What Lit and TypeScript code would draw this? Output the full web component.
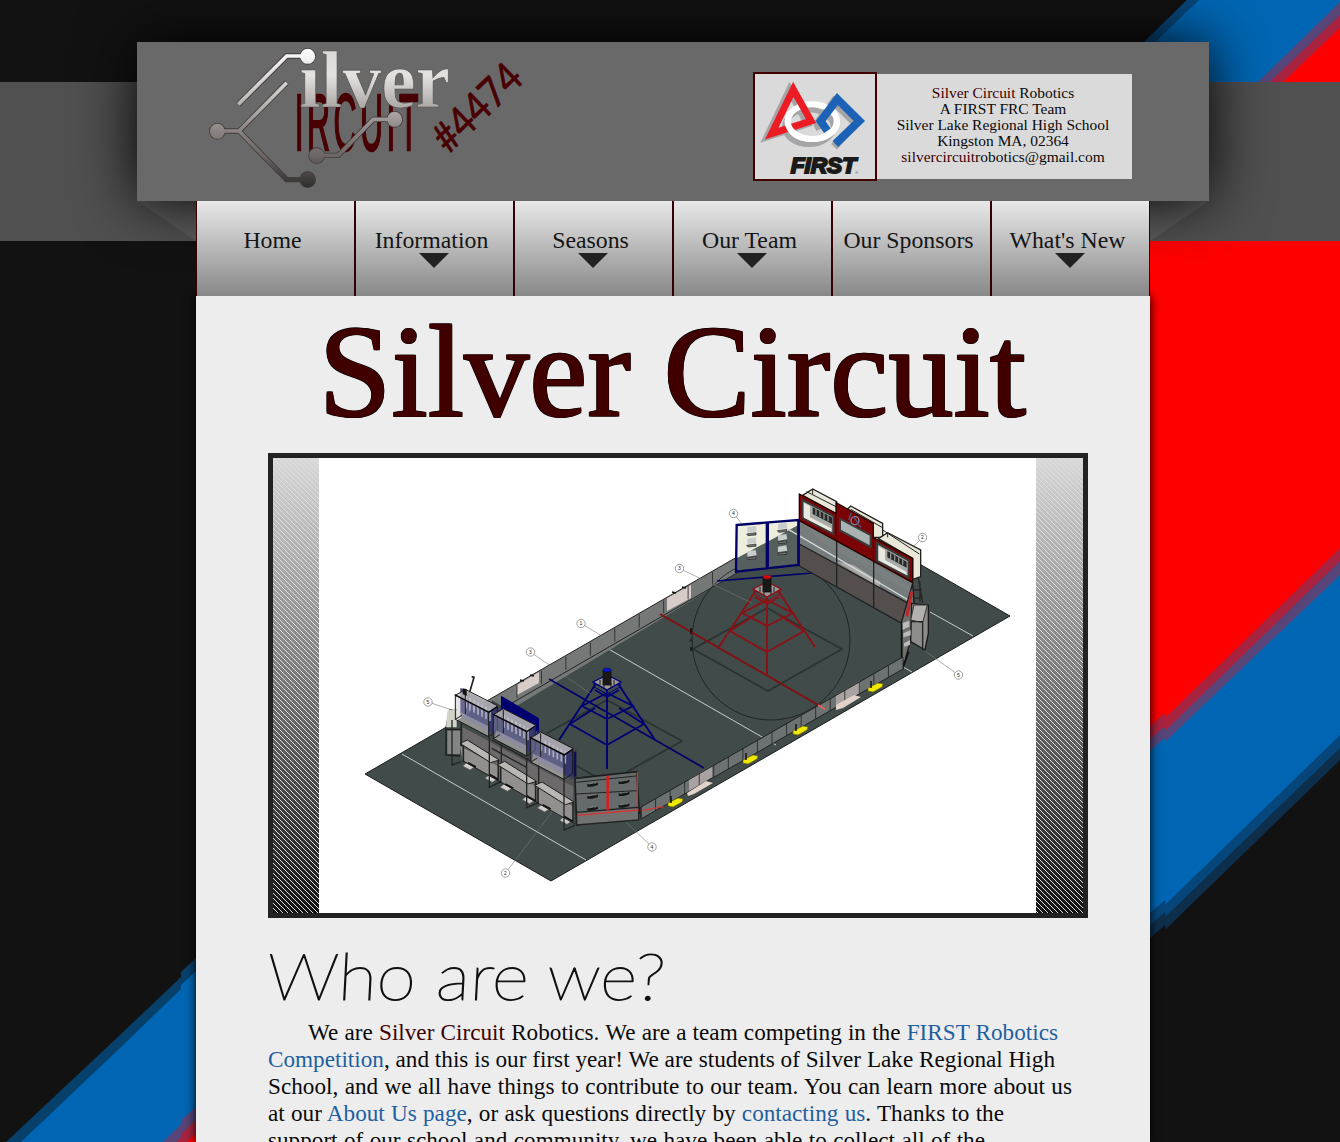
import { LitElement, html, css, svg } from "lit";
import { customElement } from "lit/decorators.js";

const INK = "#1b1b1b";

@customElement("page-backdrop")
class PageBackdrop extends LitElement {
  static styles = css`
    :host { display: block; width: 100%; height: 100%; }
    svg { display: block; }
  `;
  render() {
    return html`<svg width="1340" height="1142" viewBox="0 0 1340 1142">
      <rect width="1340" height="1142" fill="#121212" />
      <path d="M1187 0H1340V760L1166 929L1165 925L1150 938V42H1144Z" fill="#0d2f4c" />
      <path d="M1187 0H1340V748L1166 916L1165 912L1150 925V42H1144Z" fill="#07467a" />
      <path d="M1199 0H1340V735L1166 904L1165 900L1150 913V47Z" fill="#0066b3" />
      <path d="M1340 2L1258 82L1150 188V751L1164 738L1166 741L1340 575Z" fill="#574478" />
      <path d="M1340 15L1270 82L1150 200V739L1164 727L1166 730L1340 561Z" fill="#a8233f" />
      <path d="M1340 28L1283 82L1150 210V727L1164 713L1166 717L1340 548Z" fill="#f00" />
      <path d="M196 958L181 972V977L120 1035L6 1142H196Z" fill="#07406a" />
      <path d="M196 971L181 985V989L120 1048L21 1142H196Z" fill="#0066b3" />
      <path d="M196 1107L181 1120V1124L163 1142H196Z" fill="#574478" />
      <path d="M196 1120L181 1134V1137L176 1142H196Z" fill="#a8233f" />
      <path d="M196 1133L187 1142H196Z" fill="#f00" />
      <rect y="82" width="1340" height="159" fill="#505050" />
      <path d="M137 201H196V241Z" fill="#5b5b5b" />
      <path d="M1209 201H1150V241Z" fill="#5b5b5b" />
    </svg>`;
  }
}

@customElement("team-logo")
class TeamLogo extends LitElement {
  static styles = css`
    :host { display: block; }
    svg { display: block; }
    .script { font: bold 238px "Liberation Serif", serif; }
    .narrow { font: 238px "Liberation Sans", sans-serif; letter-spacing: 26px; stroke-width: 7px; }
    .number { font: 124px Lato, sans-serif; }
  `;
  render() {
    const traces = "M145 193L290 48H340M290 128L147 273H95M147 273L290 419H340M395 346H445L550 238H600";
    const nodes = [[353, 49], [82, 274], [353, 419], [380, 347], [614, 238]];
    return html`<svg width="350" height="159" viewBox="0 6 1050 477">
      <defs>
        <linearGradient id="metal" gradientUnits="userSpaceOnUse" x1="0" y1="25" x2="0" y2="445">
          <stop offset="0" stop-color="#fff" /><stop offset=".35" stop-color="#c4c0be" />
          <stop offset=".6" stop-color="#878180" /><stop offset=".77" stop-color="#6b6563" />
          <stop offset="1" stop-color="#2e2b2c" />
        </linearGradient>
        <linearGradient id="letters" gradientUnits="userSpaceOnUse" x1="0" y1="40" x2="0" y2="205">
          <stop offset="0" stop-color="#dcdad9" /><stop offset=".4" stop-color="#e4e2e1" /><stop offset="1" stop-color="#aaa6a4" />
        </linearGradient>
      </defs>
      <text class="narrow" transform="translate(314 331) scale(.402 1)" fill="#480003" stroke="#480003">IRCUIT</text>
      <text class="narrow" transform="translate(318 331) scale(.402 1)" fill="#480003" stroke="#480003" aria-hidden="true"></text>
      <text class="script" x="328" y="200" textLength="452" lengthAdjust="spacingAndGlyphs"
        fill="url(#letters)" stroke="#55504e" stroke-width="2">ilver</text>
      <path d=${traces} fill="none" stroke="#413c3b" stroke-width="16" />
      ${nodes.map(([x, y]) => svg`<circle cx=${x} cy=${y} r="25" fill="#413c3b"/>`)}
      <path d=${traces} fill="none" stroke="url(#metal)" stroke-width="11" />
      ${nodes.map(([x, y]) => svg`<circle cx=${x} cy=${y} r="22.5" fill="url(#metal)"/>`)}
      <text class="number" transform="translate(776 344) rotate(-44)" textLength="320"
        lengthAdjust="spacingAndGlyphs" fill="#480003" stroke="#480003" stroke-width="2">#4474</text>
    </svg>`;
  }
}

@customElement("first-badge")
class FirstBadge extends LitElement {
  static styles = css`
    :host { display: block; }
    svg { display: block; }
    .word { font: italic bold 68px "Liberation Sans", sans-serif; }
    .mark { font: 12px "Liberation Sans", sans-serif; }
  `;
  render() {
    return html`<svg width="120" height="105" viewBox="45 42 360 315">
      <g fill="none" stroke="#a5a5a7" transform="translate(-10 8)">
        <path d="M159 82L212 183L92 222Z" stroke-width="22" />
        <path d="M250 200L242 183L292 117L358 183L292 252" stroke-width="24" />
        <ellipse cx="217" cy="193" rx="73" ry="52" stroke-width="16" />
      </g>
      <g fill="none">
        <ellipse cx="217" cy="185" rx="74" ry="52" stroke="#fff" stroke-width="18" />
        <path d="M262 212L242 183L292 117L358 183L286 252" stroke="#1c63b7" stroke-width="24" />
        <path d="M160 88L213 183L95 221Z" stroke="#ec1c24" stroke-width="21" />
        <path d="M152 160A74 52 0 0 0 205 236" stroke="#fff" stroke-width="18" />
        <path d="M205 236A74 52 0 0 0 289 175" stroke="#fff" stroke-width="18" />
      </g>
      <text class="word" x="152" y="340" textLength="196" lengthAdjust="spacingAndGlyphs"
        fill="#1a1a1a" stroke="#1a1a1a" stroke-width="6">FIRST</text>
      <text class="mark" x="346" y="342" fill="#333">®</text>
    </svg>`;
  }
}

@customElement("field-drawing")
class FieldDrawing extends LitElement {
  static styles = css`
    :host { display: block; }
    svg { display: block; background: #fff; }
    .tag { font: 5px "Liberation Sans", sans-serif; text-anchor: middle; }
  `;

  private callout(x: number, y: number, x2: number, y2: number, n: string) {
    return svg`<path d="M${x} ${y}L${x2} ${y2}" stroke="#777" stroke-width=".6"/>
      <circle cx=${x} cy=${y} r="4.2" fill="#fff" stroke="#777" stroke-width=".7"/>
      <text class="tag" x=${x} y=${y + 1.8} fill="#222">${n}</text>`;
  }

  private tower(x: number, y: number, colour: string, cap: string) {
    return svg`<g transform="translate(${x} ${y})" fill="none" stroke=${colour} stroke-width="1.9">
      <path d="M-10 12L-48 70M10 12L48 70M0 18V99M-25 36L0 49L26 36L0 23ZM-37 54L0 75L37 54M-37 54L-12 38M37 54L12 38M-12 20L0 27L12 20"/>
      <path d="M-14 12L0 5L14 12L0 20Z" fill="#9c9a9a" stroke-width="1.3"/>
      <path d="M-13 13L0 20L13 13V17L0 24L-13 17Z" stroke-width="1"/>
      <rect x="-4" y="0" width="8" height="15" fill="#181818" stroke="#111" stroke-width=".8"/>
      <ellipse cx="0" cy="0" rx="4" ry="1.8" fill=${cap} stroke-width=".6"/>
      <path d="M-7 10V15M7 10V15M-3 13V18M4 13V18" stroke="#222" stroke-width="1"/>
    </g>`;
  }

  private postsAlong(x1: number, y1: number, x2: number, y2: number, n: number, h: number) {
    return Array.from({ length: n + 1 }, (_, i) => {
      const x = x1 + ((x2 - x1) * i) / n;
      const y = y1 + ((y2 - y1) * i) / n;
      return svg`<path d="M${x} ${y}v${h}" stroke="#222" stroke-width=".8"/>`;
    });
  }

  private blueStation(x: number, y: number) {
    return svg`<g transform="translate(${x} ${y})">
      <path d="M15 -5L128 53V140L15 82Z" fill="#34346f" opacity=".9"/>
      <path d="M0 18L30 0L128 50L100 70Z" fill="#c9c8c0" opacity=".75"/>
      <path d="M0 18L100 70V142L0 90Z" fill="#aeb0ba" opacity=".35"/>
      <path d="M8 65L98 110V140L4 90Z" fill="#d5d2c9" opacity=".38"/>
      ${[0, 1, 2, 3, 4, 5, 6].map((i) => svg`<path d="M${32 + i * 12} ${20 + i * 6.3}v37" stroke="#c9cad6" stroke-width="5" opacity=".75"/>`)}
      <path d="M0 18L30 0L128 50L100 70ZM0 18V90L100 142V70M100 142L126 125V52M0 90L20 78M30 4V74" fill="none" stroke=${INK} stroke-width="3"/>
      <path d="M98 70L126 52M-2 16L100 68" stroke="#090909" stroke-width="4"/>
    </g>`;
  }

  private blueWall() {
    return svg`<g transform="translate(360 640) scale(.33333)">
      <path d="M395 180L650 330V415H610L395 300Z" fill="#3d4645"/>
      <path d="M423 167L537 235V280L423 215Z" fill="#000070"/>
      <path d="M335 110L342 112L325 170L341 240" fill="none" stroke="#222" stroke-width="5"/>
      <path d="M270 210L258 262V345L300 348M258 268H305M262 300L308 312M268 210H290" fill="none" stroke=${INK} stroke-width="4"/>
      <path d="M262 212L290 205V262H258Z" fill="#d2d3c7"/>
      <path d="M262 272H300V342H262Z" fill="#838584"/>
      <path d="M304 262L640 420V552L304 360Z" fill="#505251"/>
      <path d="M308 262L640 440V500L308 320Z" fill="#6b6969"/>
      <path d="M300 318L642 500V552L308 362Z" fill="#92908f"/>
      ${[[300, 310], [412, 374], [524, 436]].map(([x, y]) => svg`
        <path d="M${x} ${y}L${x + 22} ${y - 10}L${x + 118} ${y + 50}L${x + 92} ${y + 58}Z" fill="#b9b6b4" stroke=${INK} stroke-width="3"/>
        <path d="M${x + 10} ${y + 8}V${y + 55}M${x + 115} ${y + 50}V${y + 112}" stroke="#222" stroke-width="5"/>
        <path d="M${x + 8} ${y + 68}l12 -10 24 13 -14 9z" fill="#cfcdc9" stroke="#555" stroke-width="2"/>
        <path d="M${x + 75} ${y + 105}l12 -10 24 13 -14 9z" fill="#cfcdc9" stroke="#555" stroke-width="2"/>
        <path d="M${x + 24} ${y + 58}l24 13M${x + 88} ${y + 93}l26 15" stroke="#111" stroke-width="5"/>`)}
      <path d="M276 240V375L304 365M388 290V442L424 424M500 355V503L535 488M612 418V570L645 556M304 250V318M395 300L515 365M395 325L500 382M424 310V370M536 370V430" fill="none" stroke="#232525" stroke-width="4"/>
      <path d="M308 362L645 552" stroke="#171717" stroke-width="3"/>
      ${this.blueStation(286, 148)}${this.blueStation(400, 206)}${this.blueStation(512, 276)}
      <path d="M308 145V162L320 168V148Z" fill="#111"/>
      <path d="M645 335V410" stroke="#10104f" stroke-width="8"/>
      <path d="M645 415L830 395L838 520L650 555Z" fill="#646b6a" stroke="#1c1f1f" stroke-width="5"/>
      <path d="M648 427L828 408M648 462L832 452" stroke="#222" stroke-width="3"/>
      <path d="M650 517L836 502V540L650 555Z" fill="#6f7271" stroke="#222" stroke-width="4"/>
      <path d="M743 407V512" stroke="#ee1111" stroke-width="7"/>
      <path d="M652 526L836 510M832 397V500M845 512L910 500" stroke="#d63533" stroke-width="4"/>
      ${[[682, 432], [682, 468], [682, 504], [776, 424], [776, 460], [776, 495]].map(([x, y]) => svg`
        <path d="M${x} ${y}l20 -4h12v7l-18 5h-14z" fill="#161616"/><path d="M${x + 3} ${y}l16 -3h8" stroke="#aaa" stroke-width="2"/>`)}
    </g>`;
  }

  private redWall() {
    const boxes = ["M488 76L518 57L590 95V132Z", "M620 120L632 108L728 160V202H700Z", "M715 206L743 188L842 240V320L818 328V265Z"];
    const windows = ["M487 90L580 138V192L487 143Z", "M600 146L692 195V231L600 181Z", "M711 219L806 271V322L711 273Z"];
    return svg`<g transform="translate(640 470) scale(.33333)">
      ${boxes.map((d) => svg`<path d=${d} fill="#e9e8d9" stroke="#222" stroke-width="4"/>`)}
      <path d="M500 65L588 110M632 118L726 172M728 180L838 252M518 57V72M743 188V202" stroke="#222" stroke-width="3"/>
      <path d="M290 165L475 150V285L288 305Z" fill="#555f5d"/>
      <path d="M290 165L475 150V165L290 265Z" fill="#eeeedd"/>
      <path d="M478 152L818 335V405L478 222Z" fill="#757c7b"/>
      <path d="M500 165L818 350V370L540 215Z" fill="#8c9190" opacity=".2"/>
      <path d="M478 222L812 402L785 460L478 288Z" fill="#544f4d"/>
      <path d="M590 275L640 285L720 335L718 352Z" fill="#aaa9a6"/>
      <path d="M440 175L805 390" stroke="#d5d9d8" stroke-width="4"/>
      <path d="M478 222L812 404M478 288L785 460M590 210V352M701 275V415M478 152V288" fill="none" stroke="#202323" stroke-width="4"/>
      <path d="M478 72L588 130V98L700 160V203L818 265V338L478 152Z" fill="#7b0205" stroke="#250000" stroke-width="4"/>
      <path d="M588 130V210M700 203V275" stroke="#4a0003" stroke-width="3"/>
      ${windows.map((d, i) => svg`<path d=${d} fill=${i === 1 ? "#a9b3b2" : "#a8aca8"} stroke="#3a3a3a" stroke-width="6"/>`)}
      <path d="M492 98L510 108V142L574 175V185L492 143ZM716 228L735 240V270L800 306V315L716 271Z" fill="#e9e9df"/>
      <path d="M518 112L576 142V162L518 132ZM742 243L800 275V293L742 262Z" fill="#272727"/>
      ${[0, 1, 2, 3].map((i) => svg`<path d="M${528 + i * 12} ${118 + i * 6}v18M${752 + i * 12} ${250 + i * 6}v16" stroke="#8f9692" stroke-width="4"/>`)}
      <circle cx="645" cy="152" r="12" fill="none" stroke="#85859a" stroke-width="4"/>
      <path d="M634 128L626 150M650 160L664 172M640 140L655 160" stroke="#4d567f" stroke-width="4"/>
      <path d="M290 165L475 150V285L288 305ZM382 158V296" fill="none" stroke="#000065" stroke-width="7"/>
      <path d="M382 158V296" stroke="#000065" stroke-width="10"/>
      ${[[322, 172], [322, 206], [322, 244], [414, 162], [414, 196], [414, 230]].map(([x, y]) => svg`
        <path d="M${x} ${y}l25 -4l3 16l-28 4z" fill="#c9cccc"/><path d="M${x - 2} ${y + 20}l28 -4v7l-24 2z" fill="#777" stroke="#222" stroke-width="2"/>`)}
      <path d="M818 340L785 455V560L790 590L812 510L822 400Z" fill="#70706e" stroke=${INK} stroke-width="4"/>
      <path d="M815 365L800 440" stroke="#bb2828" stroke-width="9"/>
      <path d="M815 400L865 405V490L855 540L812 515Z" fill="#8c8c8b" stroke=${INK} stroke-width="4"/>
      <path d="M822 405L862 405L848 458L812 450Z" fill="#b3b0ae" stroke="#333" stroke-width="3"/>
      <path d="M848 458V540M812 455H850M835 325L848 398M840 335V395M822 360L846 358M824 385L848 383" stroke="#252525" stroke-width="4"/>
      <path d="M786 460L808 452V470L786 480ZM790 490L812 480V496L790 502ZM792 520L810 510V525L792 530Z" fill="#bbb"/>
      <path d="M785 460V560L790 590L806 545" fill="none" stroke="#111" stroke-width="5"/>
    </g>`;
  }

  render() {
    return html`<svg width="717" height="455" viewBox="319 458 717 455">
      <path d="M365 774L824 509L1010 616L551 881Z" fill="#414b49" stroke="#1a1d1d" stroke-width="1" />
      <path d="M402 754L586 860M605 647L776 745M930 612L973 636M903 667L912 672" stroke="#c8cdcb" stroke-width="1" />
      <path d="M737 557L485 702L510 710L737 573Z" fill="#747978" />
      <path d="M691 585L667 598V611L691 598ZM539 672L517 685V695L539 683Z" fill="#d8ccc8" />
      <path d="M737 557L485 702M737 573L512 703" stroke="#222" stroke-width="1" />
      ${this.postsAlong(737, 558, 517, 685, 9, 13)}
      <path d="M672 592l4 1M682 587l4 1M520 680l4 1M530 675l4 1" stroke="#111" stroke-width="1.5" />
      <path d="M693 649L767 608L842 649L768 691ZM607 700L682 741L607 783L533 741Z" fill="none" stroke="#293432" stroke-width="1.7" />
      <ellipse cx="771" cy="640" rx="79" ry="80" fill="none" stroke="#171d1d" stroke-width=".8" />
      <path d="M660 614L827 710" stroke="#801012" stroke-width="2" />
      <path d="M549 679L704 768M717 581L812 573" stroke="#000069" stroke-width="1.7" />
      ${this.redWall()}
      ${this.tower(767, 577, "#8b1114", "#e80000")}
      ${this.tower(607, 670, "#000075", "#0018d8")}
      <path d="M903 657L641 807V819L903 669Z" fill="#6c7271" />
      <path d="M860 681L836 695V706L860 693ZM712 766L689 779V791L712 777Z" fill="#a8a3a1" />
      <path d="M903 657L641 807V819L903 669" fill="none" stroke="#222" stroke-width="1" />
      ${this.postsAlong(903, 657, 641, 807, 18, 12)}
      <path d="M836 705l18 -10l7 2l-18 11l-7 2zM687 793l19 -12l7 2l-19 11l-6 2z" fill="#e2d2cc" />
      ${[[868, 688], [793, 731], [743, 760], [668, 803]].map(([x, y]) => svg`
        <path d="M${x} ${y}l10 -5l5 1l-1 3l-9 5l-5 -1z" fill="#f1e900" stroke="#6b6900" stroke-width=".6"/>
        <path d="M${x + 3} ${y - 7}v7" stroke="#111" stroke-width="1.5"/>`)}
      <path d="M818 705L825 709" stroke="#ee6060" stroke-width="1.5" />
      ${this.blueWall()}
      <path d="M691 628v6M691 647v4" stroke="#111" stroke-width="1.5" />
      <text class="tag" x="691" y="642" fill="#111">A</text>
      ${this.callout(733.5, 513.5, 742, 524, "4")}
      ${this.callout(922.5, 537.5, 914, 546, "2")}
      ${this.callout(679.5, 568.5, 752, 603, "3")}
      ${this.callout(581, 623.5, 602, 636, "1")}
      ${this.callout(530.5, 652, 591, 694, "3")}
      ${this.callout(428, 702, 452, 710, "5")}
      ${this.callout(958.5, 675, 925, 651, "5")}
      ${this.callout(652, 847, 626, 822, "4")}
      ${this.callout(505.5, 873, 552, 812, "2")}
    </svg>`;
  }
}

@customElement("app-root")
class AppRoot extends LitElement {
  static styles = css`
    :host {
      display: block; position: relative; height: 1142px; overflow: hidden;
      background: #121212; font-family: "Liberation Serif", serif; color: #0a0a0a;
    }
    .backdrop { position: absolute; inset: 0; }
    .page { position: relative; display: flex; flex-direction: column; padding: 42px 131px 0 137px; }
    .header {
      display: flex; align-items: flex-start; height: 159px; background: #696969;
      box-shadow: 0 0 60px #000; padding-left: 53px; box-sizing: border-box;
    }
    .contact { display: flex; align-items: flex-start; margin: 30px 0 0 213px; }
    .badge { border: 2px solid #400000; background: #dadada; width: 120px; height: 105px; }
    .address {
      background: #dadada; width: 255px; height: 105px; margin-top: 2px; box-sizing: border-box;
      padding: 11px 3px 0 0; text-align: center; font-size: 15.45px; line-height: 16px;
    }
    .maroon { color: #400000; }
    .column { position: relative; width: 954px; margin-left: 59px; }
    .nav { display: grid; grid-template-columns: repeat(6, 1fr); height: 95px; }
    .item {
      display: flex; flex-direction: column; align-items: center; box-sizing: border-box;
      border: solid #350000; border-width: 0 1px; padding-top: 26px;
      background: linear-gradient(#e8e8e8, #888); color: #151515; font-size: 23.8px; line-height: 26px;
    }
    .label { margin-right: 6px; white-space: nowrap; }
    .arrow { border: solid transparent; border-width: 15px 15px 0; border-top-color: #222; margin-right: 1px; }
    .content {
      height: 846px; box-sizing: border-box; background: #ededed;
      box-shadow: 0 0 10px #000; padding: 0 62px 0 72px; overflow: hidden;
    }
    .title {
      margin: 0; height: 157px; padding-right: 11px; text-align: center; white-space: nowrap;
      font-weight: 400; font-size: 130.6px; line-height: 153px; color: #400000;
      text-shadow: 1px 1px #000, -1px -1px #000, 1px -1px #000, -1px 1px #000;
      -webkit-text-stroke: 1.4px #400000;
    }
    .slides {
      width: 820px; height: 465px; box-sizing: border-box; border: 5px solid #222;
      display: flex; justify-content: center; padding-right: 1px;
      background:
        url("data:image/svg+xml,%3Csvg xmlns='http://www.w3.org/2000/svg' width='5' height='5' shape-rendering='crispEdges'%3E%3Cpath d='M0 0h1v1h-1zM1 1h1v1h-1zM2 2h1v1h-1zM3 3h1v1h-1zM4 4h1v1h-1z' fill='%23dedede'/%3E%3C/svg%3E") padding-box,
        linear-gradient(#d9d9d9, #111) padding-box;
    }
    .heading { display: block; margin-top: 26px; }
    .thin { font: 100 65px Lato, sans-serif; }
    .copy { margin: 0; padding-top: 5px; }
    .line {
      display: block; font-size: 23.2px; line-height: 27px; white-space: nowrap;
      text-align: justify; text-align-last: justify;
    }
    .l1 { width: 750px; margin-left: 40px; }
    .l2 { width: 787px; }
    .l3 { width: 804px; }
    .l4 { width: 736px; }
    .l5 { width: 717px; }
    .link { color: #1d5fa0; }
  `;

  private items = [
    { label: "Home", menu: false },
    { label: "Information", menu: true },
    { label: "Seasons", menu: true },
    { label: "Our Team", menu: true },
    { label: "Our Sponsors", menu: false },
    { label: "What's New", menu: true },
  ];

  render() {
    return html`
      <page-backdrop class="backdrop"></page-backdrop>
      <div class="page">
        <header class="header">
          <team-logo></team-logo>
          <div class="contact">
            <first-badge class="badge"></first-badge>
            <div class="address">
              <span class="maroon">Silver Circuit</span> Robotics<br />A FIRST FRC Team<br />Silver Lake Regional High School<br />
              Kingston MA, 02364<br /><span class="maroon">silvercircuit</span>robotics@gmail.com
            </div>
          </div>
        </header>
        <div class="column">
          <nav class="nav">
            ${this.items.map((i) => html`<div class="item"><span class="label">${i.label}</span>${i.menu ? html`<span class="arrow"></span>` : ""}</div>`)}
          </nav>
          <main class="content">
            <h1 class="title">Silver Circuit</h1>
            <div class="slides"><field-drawing></field-drawing></div>
            <svg class="heading" width="420" height="70" viewBox="268 944 420 70">
              <text class="thin" transform="translate(266 1000) skewX(-3)" textLength="398" lengthAdjust="spacingAndGlyphs" fill="#111" stroke="#111" stroke-width="1.2">Who are we?</text>
            </svg>
            <p class="copy">
              <span class="line l1">We are <span class="maroon">Silver Circuit</span> Robotics. We are a team competing in the <span class="link">FIRST Robotics</span></span>
              <span class="line l2"><span class="link">Competition</span>, and this is our first year! We are students of Silver Lake Regional High</span>
              <span class="line l3">School, and we all have things to contribute to our team. You can learn more about us</span>
              <span class="line l4">at our <span class="link">About Us page</span>, or ask questions directly by <span class="link">contacting us</span>. Thanks to the</span>
              <span class="line l5">support of our school and community, we have been able to collect all of the</span>
            </p>
          </main>
        </div>
      </div>
    `;
  }
}
